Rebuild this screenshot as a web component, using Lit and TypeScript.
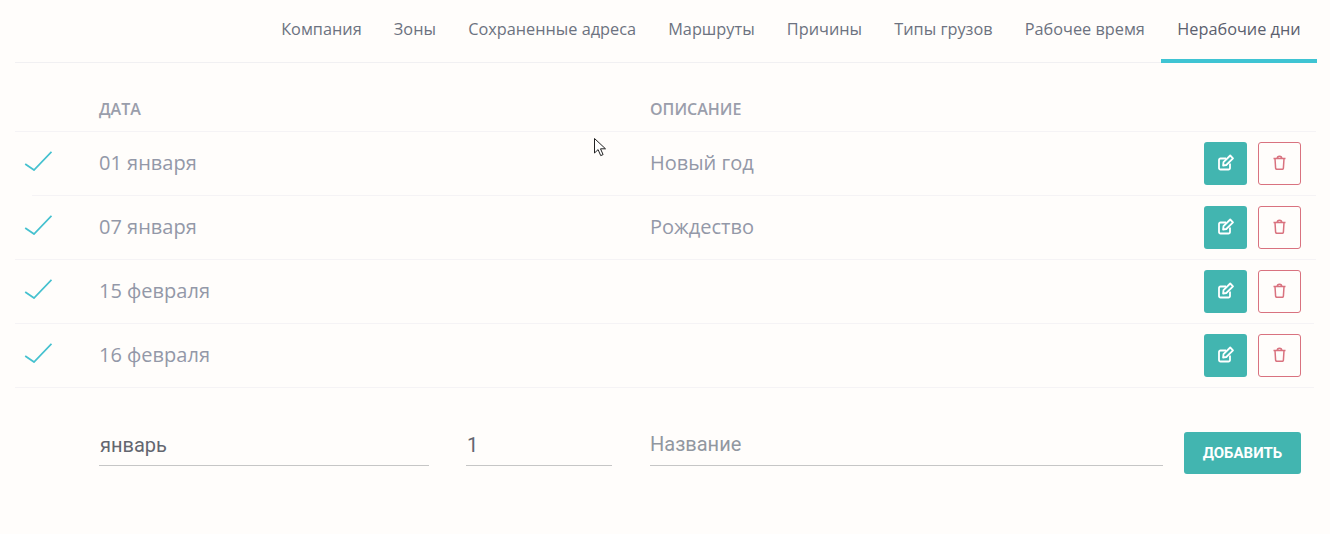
import { LitElement, html, css, svg } from 'lit';
import { customElement } from 'lit/decorators.js';

const tabs = ['Компания', 'Зоны', 'Сохраненные адреса', 'Маршруты', 'Причины', 'Типы грузов', 'Рабочее время', 'Нерабочие дни'];

const rows = [
  { date: '01 января', text: 'Новый год', sep: 'inset' },
  { date: '07 января', text: 'Рождество', sep: '' },
  { date: '15 февраля', text: '', sep: 'short' },
  { date: '16 февраля', text: '', sep: 'short' },
];

const check = svg`<path d="M1.2 13 L10 19 L27.5 .8" fill="none" stroke="#45c1cf" stroke-width="1.8"/>`;

const editIcon = svg`
  <path d="M13 9.5V14a1.5 1.5 0 0 1-1.5 1.5h-8A1.5 1.5 0 0 1 2 14V6a1.5 1.5 0 0 1 1.5-1.5H9" fill="none" stroke="#fff" stroke-width="1.8"/>
  <path d="M6.5 8.2 13.2 1.5l2.8 2.8-6.7 6.7-3.2.5z" fill="none" stroke="#fff" stroke-width="1.8" stroke-linejoin="round"/>`;

const trashIcon = svg`
  <path d="M.5 3.5h12M4.2 3.5c0-3 4.6-3 4.6 0" fill="none" stroke="#d9727f" stroke-width="1.5"/>
  <path d="M2 3.5l.6 9.6q.1 1.2 1.3 1.2h5.2q1.2 0 1.3-1.2l.6-9.6" fill="none" stroke="#d9727f" stroke-width="1.5" stroke-linejoin="round"/>`;

@customElement('app-root')
export class AppRoot extends LitElement {
  static styles = css`
    :host {
      display: block;
      position: relative;
      height: 534px;
      background: #fffdfb;
      font-family: 'Open Sans', sans-serif;
      overflow: hidden;
    }

    .page {
      padding: 0 13px 0 15px;
    }

    .tabs {
      display: flex;
      justify-content: flex-end;
      height: 62px;
      border-bottom: 1px solid #f1f0f2;
    }

    .tab {
      padding: 20px 16.1px 0;
      margin-bottom: -1px;
      font-size: 16.3px;
      line-height: 18px;
      color: #6c7280;
      box-sizing: border-box;
    }

    .tab.active {
      color: #5b606e;
      padding: 20px 16.4px 0;
      border-bottom: 4px solid #3fc4d3;
    }

    .row {
      display: grid;
      grid-template-columns: 84px 551px 1fr 97px;
      align-items: center;
      height: 63px;
      padding-right: 16px;
      box-sizing: border-box;
      color: #9398a8;
      font-size: 20px;
      line-height: 26px;
    }

    .head {
      height: 68px;
      padding-top: 23px;
      font-size: 16px;
      font-weight: 600;
      color: #9a9eab;
    }

    .sep {
      height: 1px;
      margin-right: 1px;
      background: #f5f3f5;
    }

    .sep.inset {
      margin-left: 17px;
    }

    .sep.short {
      margin-right: 3px;
    }

    .text {
      margin-top: -2px;
    }

    .check {
      width: 28px;
      height: 20px;
      margin: 0 0 5px 9px;
      display: block;
    }

    .actions {
      display: flex;
      gap: 11px;
    }

    .btn {
      width: 43px;
      height: 43px;
      border-radius: 3px;
      box-sizing: border-box;
      display: flex;
      align-items: center;
      justify-content: center;
    }

    .btn svg {
      margin-bottom: 2px;
    }

    .edit {
      background: #42b5b0;
    }

    .del {
      border: 1px solid #d9727f;
    }

    .form {
      display: flex;
      align-items: flex-start;
      padding: 43px 15px 0 84px;
      font-family: 'Roboto', sans-serif;
      font-size: 20px;
      color: #63666f;
    }

    .field {
      height: 35px;
      padding: 1px 0 0 1px;
      line-height: 26px;
      border-bottom: 1px solid #c6c6c6;
      box-sizing: border-box;
    }

    .month {
      width: 330px;
      margin-right: 37px;
    }

    .day {
      width: 146px;
      margin-right: 38px;
    }

    .name {
      width: 513px;
      margin-right: 21px;
      padding: 0;
      color: #9197a0;
    }

    .add {
      width: 117px;
      height: 42px;
      margin-top: 1px;
      border-radius: 3px;
      background: #42b5b0;
      color: #fff;
      font-size: 15px;
      font-weight: 700;
      display: flex;
      align-items: center;
      justify-content: center;
    }

    .cursor {
      position: absolute;
      left: 594px;
      top: 138px;
    }
  `;

  render() {
    return html`
      <div class="page">
        <div class="tabs">
          ${tabs.map((t, i) => html`<div class="tab ${i === tabs.length - 1 ? 'active' : ''}">${t}</div>`)}
        </div>
        <div class="row head">
          <div></div>
          <div>ДАТА</div>
          <div>ОПИСАНИЕ</div>
          <div></div>
        </div>
        <div class="sep"></div>
        ${rows.map(r => html`
          <div class="row">
            <svg class="check" viewBox="0 0 28 20">${check}</svg>
            <div class="text">${r.date}</div>
            <div class="text">${r.text}</div>
            <div class="actions">
              <div class="btn edit"><svg width="18" height="17" viewBox="0 0 18 17">${editIcon}</svg></div>
              <div class="btn del"><svg width="13" height="15" viewBox="0 0 13 15">${trashIcon}</svg></div>
            </div>
          </div>
          <div class="sep ${r.sep}"></div>
        `)}
        <div class="form">
          <div class="field month">январь</div>
          <div class="field day">1</div>
          <div class="field name">Название</div>
          <div class="add">ДОБАВИТЬ</div>
        </div>
      </div>
      <svg class="cursor" width="14" height="20" viewBox="0 0 14 20">
        <path d="M.5.5v14.5l3.6-3.4 2.6 6 2.4-1-2.6-5.8h5z" fill="#fff" stroke="#222" stroke-width="1"/>
      </svg>
    `;
  }
}
